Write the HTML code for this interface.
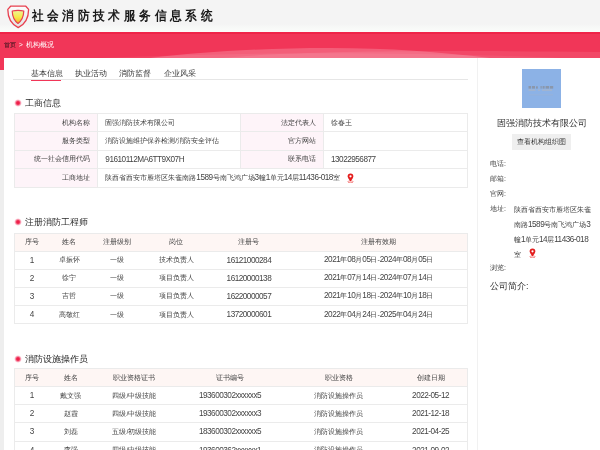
<!DOCTYPE html>
<html><head><meta charset="utf-8">
<style>
*{margin:0;padding:0;box-sizing:border-box}
html,body{width:600px;height:450px;overflow:hidden}
body{background:#eeeeee;font-family:"Liberation Sans",sans-serif;color:#444;position:relative}
.abs{position:absolute}
#hdr{left:0;top:0;width:600px;height:31.5px;background:linear-gradient(#f4f4f4 0,#f4f4f4 24px,#f7f8f7 27px,#fafcfa 31.5px)}
#title{left:31.6px;top:7.8px;width:190px;height:16px;font-size:13.3px;font-weight:bold;color:#1a1a1a;white-space:nowrap;line-height:16px}
.tc{position:absolute;top:0;transform:scaleX(0.9);transform-origin:0 0}
#band{left:0;top:31.5px;width:600px;height:38.5px;background:linear-gradient(#f0244a 0,#ef2448 1.5px,#f13658 2.5px,#f13658 100%);overflow:hidden}
#crumb{left:4px;top:40.6px;font-size:6.5px;line-height:8px;color:#fff;white-space:nowrap}
#crumb b{font-weight:bold;color:#6b1d2c}
#main{left:4px;top:58px;width:596px;height:392px;background:#fff}
#vline{left:477px;top:58px;width:1px;height:392px;background:#f1f1f1}
.tab{position:absolute;top:68.8px;font-size:7.5px;line-height:9.5px;color:#3a3a3a;white-space:nowrap}
#tabline{left:13px;top:79.3px;width:455px;height:1px;background:#e6e6e6}
#tabact{left:30.5px;top:79.8px;width:30.5px;height:1.3px;background:#f13658}
.sec{position:absolute;left:25px;font-size:9px;line-height:12px;color:#2a2a2a;white-space:nowrap}
.dot{position:absolute;left:14px;width:8px;height:8px;border-radius:50%;background:radial-gradient(circle at center,#ee1f48 0,#ee1f48 1.3px,rgba(242,70,110,.55) 2.6px,rgba(245,120,150,.12) 3.6px,rgba(255,255,255,0) 4px)}
table{position:absolute;left:13.5px;width:454.5px;border-collapse:collapse;font-size:7px;color:#444}
td,th{border:1px solid #ebebeb;font-weight:normal;white-space:nowrap;padding:0}
.t1 td{height:18.4px}
.t1 .lb{background:#fef4f9;text-align:right;padding-right:7.2px}
.t1 .vl{text-align:left;padding-left:7px}
.t2{border:1px solid #ebebeb}
.t2 th,.t2 td{border-left:none;border-right:none}
.t2 th{background:#fef6f4;height:18px;text-align:center}
.t2 td{height:18.2px;text-align:center}
.n{font-size:8.2px;letter-spacing:-0.5px}
.side{left:490px;font-size:7px;line-height:10px;color:#444;white-space:nowrap}
</style></head><body><div style="position:absolute;left:0;top:0;width:600px;height:450px;will-change:transform">
<div class="abs" id="hdr"></div>
<svg class="abs" style="left:7px;top:5.4px" width="23" height="25" viewBox="0 0 23 25">
<defs><linearGradient id="g1" x1="0" y1="0" x2="0" y2="1"><stop offset="0" stop-color="#fdfdfd"/><stop offset="1" stop-color="#e2e2e2"/></linearGradient>
<linearGradient id="g2" x1="0" y1="0" x2="0" y2="1"><stop offset="0" stop-color="#eef39a"/><stop offset="0.5" stop-color="#f6ea4a"/><stop offset="1" stop-color="#f4b030"/></linearGradient></defs>
<path d="M3.6 1.2 L18.8 1.2 L21.6 4.4 C21.6 13 17.5 19.4 11.2 22.6 C4.9 19.4 0.8 13 0.8 4.4 Z" fill="url(#g1)" stroke="#e8404f" stroke-width="1.3" stroke-linejoin="round"/>
<path d="M5.2 6 C8.5 5.4 13.5 5.4 16.8 6 C16.6 11.5 14.6 15.8 11 18.4 C7.4 15.8 5.4 11.5 5.2 6 Z" fill="url(#g2)" stroke="#e8404f" stroke-width="1.2" stroke-linejoin="round"/>
</svg>
<div class="abs" id="title"><span class="tc" style="left:0.00px">社</span><span class="tc" style="left:15.38px">会</span><span class="tc" style="left:30.76px">消</span><span class="tc" style="left:46.14px">防</span><span class="tc" style="left:61.52px">技</span><span class="tc" style="left:76.90px">术</span><span class="tc" style="left:92.28px">服</span><span class="tc" style="left:107.66px">务</span><span class="tc" style="left:123.04px">信</span><span class="tc" style="left:138.42px">息</span><span class="tc" style="left:153.80px">系</span><span class="tc" style="left:169.18px">统</span></div>
<div class="abs" id="band"></div>
<svg class="abs" style="left:0;top:32px" width="600" height="26" viewBox="0 0 600 26">
<path d="M150 26 C200 20 260 16 330 16 C390 16 440 20 490 26Z" fill="#fff" fill-opacity="0.20"/>
<path d="M220 26 C300 19 420 18 600 20 L600 26Z" fill="#fff" fill-opacity="0.09"/>
<path d="M100 26 C200 22 300 20 420 22 C480 23 540 25 560 26Z" fill="#fff" fill-opacity="0.07"/>
</svg>
<div class="abs" id="crumb"><b style="font-size:6.2px">首页</b> <span style="font-size:7px;margin-left:1px">&gt;</span> <span style="margin-left:1.5px;font-size:7px">机构概况</span></div>
<div class="abs" id="main"></div>
<div class="abs" id="vline"></div>

<div class="tab" style="left:31px">基本信息</div>
<div class="tab" style="left:75px">执业活动</div>
<div class="tab" style="left:119px">消防监督</div>
<div class="tab" style="left:164px">企业风采</div>
<div class="abs" id="tabline"></div>
<div class="abs" id="tabact"></div>

<div class="dot" style="top:99.2px"></div>
<div class="sec" style="top:97px">工商信息</div>
<table class="t1" style="top:113px">
<colgroup><col style="width:84px"><col style="width:143px"><col style="width:83px"><col style="width:144.5px"></colgroup>
<tr><td class="lb">机构名称</td><td class="vl">固强消防技术有限公司</td><td class="lb">法定代表人</td><td class="vl">徐春王</td></tr>
<tr><td class="lb">服务类型</td><td class="vl">消防设施维护保养检测/消防安全评估</td><td class="lb">官方网站</td><td class="vl"></td></tr>
<tr><td class="lb">统一社会信用代码</td><td class="vl"><span class="n">91610112MA6TT9X07H</span></td><td class="lb">联系电话</td><td class="vl"><span class="n">13022956877</span></td></tr>
<tr><td class="lb">工商地址</td><td class="vl" colspan="3">陕西省西安市雁塔区朱雀南路<span class="n">1589</span>号南飞鸿广场<span class="n">3</span>幢<span class="n">1</span>单元<span class="n">14</span>层<span class="n">11436-018</span>室</td></tr>
</table>

<div class="dot" style="top:218px"></div>
<div class="sec" style="top:216px">注册消防工程师</div>
<table class="t2" style="top:232.5px">
<colgroup><col style="width:35px"><col style="width:41px"><col style="width:55px"><col style="width:63px"><col style="width:83px"><col style="width:177.5px"></colgroup>
<tr><th>序号</th><th>姓名</th><th>注册级别</th><th>岗位</th><th>注册号</th><th>注册有效期</th></tr>
<tr><td><span class="n">1</span></td><td>卓振怀</td><td>一级</td><td>技术负责人</td><td><span class="n">16121000284</span></td><td><span class="n">2021</span>年<span class="n">08</span>月<span class="n">05</span>日-<span class="n">2024</span>年<span class="n">08</span>月<span class="n">05</span>日</td></tr>
<tr><td><span class="n">2</span></td><td>徐宁</td><td>一级</td><td>项目负责人</td><td><span class="n">16120000138</span></td><td><span class="n">2021</span>年<span class="n">07</span>月<span class="n">14</span>日-<span class="n">2024</span>年<span class="n">07</span>月<span class="n">14</span>日</td></tr>
<tr><td><span class="n">3</span></td><td>吉哲</td><td>一级</td><td>项目负责人</td><td><span class="n">16220000057</span></td><td><span class="n">2021</span>年<span class="n">10</span>月<span class="n">18</span>日-<span class="n">2024</span>年<span class="n">10</span>月<span class="n">18</span>日</td></tr>
<tr><td><span class="n">4</span></td><td>高敬红</td><td>一级</td><td>项目负责人</td><td><span class="n">13720000601</span></td><td><span class="n">2022</span>年<span class="n">04</span>月<span class="n">24</span>日-<span class="n">2025</span>年<span class="n">04</span>月<span class="n">24</span>日</td></tr>
</table>

<div class="dot" style="top:355px"></div>
<div class="sec" style="top:353px">消防设施操作员</div>
<table class="t2" style="top:368px">
<colgroup><col style="width:35px"><col style="width:43.5px"><col style="width:84.5px"><col style="width:107px"><col style="width:111px"><col style="width:73.5px"></colgroup>
<tr><th>序号</th><th>姓名</th><th>职业资格证书</th><th>证书编号</th><th>职业资格</th><th>创建日期</th></tr>
<tr><td><span class="n">1</span></td><td>戴文强</td><td>四级/中级技能</td><td><span class="n">193600302xxxxxx5</span></td><td>消防设施操作员</td><td><span class="n">2022-05-12</span></td></tr>
<tr><td><span class="n">2</span></td><td>赵霞</td><td>四级/中级技能</td><td><span class="n">193600302xxxxxx3</span></td><td>消防设施操作员</td><td><span class="n">2021-12-18</span></td></tr>
<tr><td><span class="n">3</span></td><td>刘磊</td><td>五级/初级技能</td><td><span class="n">183600302xxxxxx5</span></td><td>消防设施操作员</td><td><span class="n">2021-04-25</span></td></tr>
<tr><td><span class="n">4</span></td><td>李强</td><td>四级/中级技能</td><td><span class="n">193600362xxxxxx1</span></td><td>消防设施操作员</td><td><span class="n">2021-09-02</span></td></tr>
</table>


<div class="abs" style="left:522px;top:68.5px;width:39px;height:39px;background:#8cb2e6"></div>
<svg class="abs" style="left:522px;top:68.5px" width="39" height="39" viewBox="0 0 39 39">
<g fill="#8a97ab"><rect x="6.5" y="17" width="2.6" height="2.6"/><rect x="10" y="17" width="3" height="2.6"/><rect x="14" y="17.3" width="1.8" height="2.3"/><rect x="18.5" y="17" width="1.2" height="2.6"/><rect x="20.6" y="17" width="2" height="2.6"/><rect x="23.6" y="17" width="3.6" height="2.6"/><rect x="28" y="17" width="3.2" height="2.6"/></g>
<g fill="#a9b6c8"><rect x="6.5" y="20.5" width="7" height="1.2"/><rect x="16" y="20.5" width="2" height="1.2"/><rect x="20" y="20.5" width="10" height="1.2"/><rect x="7" y="25.5" width="24" height="0.8" fill-opacity="0.5"/></g>
</svg>
<div class="abs" style="left:481px;top:117px;width:121px;text-align:center;font-size:9px;line-height:12px;color:#333;white-space:nowrap">固强消防技术有限公司</div>
<div class="abs" style="left:511.5px;top:134px;width:59px;height:15.5px;background:#efefef;font-size:7px;line-height:15.5px;text-align:center;color:#333;white-space:nowrap">查看机构组织图</div>
<div class="abs side" style="top:159px">电话:</div>
<div class="abs side" style="top:174px">邮箱:</div>
<div class="abs side" style="top:188.5px">官网:</div>
<div class="abs side" style="top:203.5px">地址:</div>
<div class="abs side" style="left:514px;top:201.5px;width:78px;white-space:normal;line-height:15px">陕西省西安市雁塔区朱雀南路<span class="n">1589</span>号南飞鸿广场<span class="n">3</span>幢<span class="n">1</span>单元<span class="n">14</span>层<span class="n">11436-018</span>室</div>
<div class="abs side" style="top:263px">浏览:</div>
<div class="abs" style="left:490px;top:280px;font-size:9px;line-height:12px;color:#333;white-space:nowrap">公司简介:</div>
<svg class="abs" style="left:347px;top:172.5px" width="7" height="10" viewBox="0 0 7 10"><ellipse cx="3.5" cy="8.8" rx="2.6" ry="1" fill="none" stroke="#e33" stroke-width="0.6"/><path d="M3.5 0.5 C1.6 0.5 0.6 1.9 0.6 3.3 C0.6 5.2 3.5 8.5 3.5 8.5 C3.5 8.5 6.4 5.2 6.4 3.3 C6.4 1.9 5.4 0.5 3.5 0.5Z" fill="#e41e1e"/><circle cx="3.5" cy="3.3" r="1.1" fill="#fff"/></svg>
<svg class="abs" style="left:529px;top:248px" width="7" height="10" viewBox="0 0 7 10"><ellipse cx="3.5" cy="8.8" rx="2.6" ry="1" fill="none" stroke="#e33" stroke-width="0.6"/><path d="M3.5 0.5 C1.6 0.5 0.6 1.9 0.6 3.3 C0.6 5.2 3.5 8.5 3.5 8.5 C3.5 8.5 6.4 5.2 6.4 3.3 C6.4 1.9 5.4 0.5 3.5 0.5Z" fill="#e41e1e"/><circle cx="3.5" cy="3.3" r="1.1" fill="#fff"/></svg>
</div></body></html>
